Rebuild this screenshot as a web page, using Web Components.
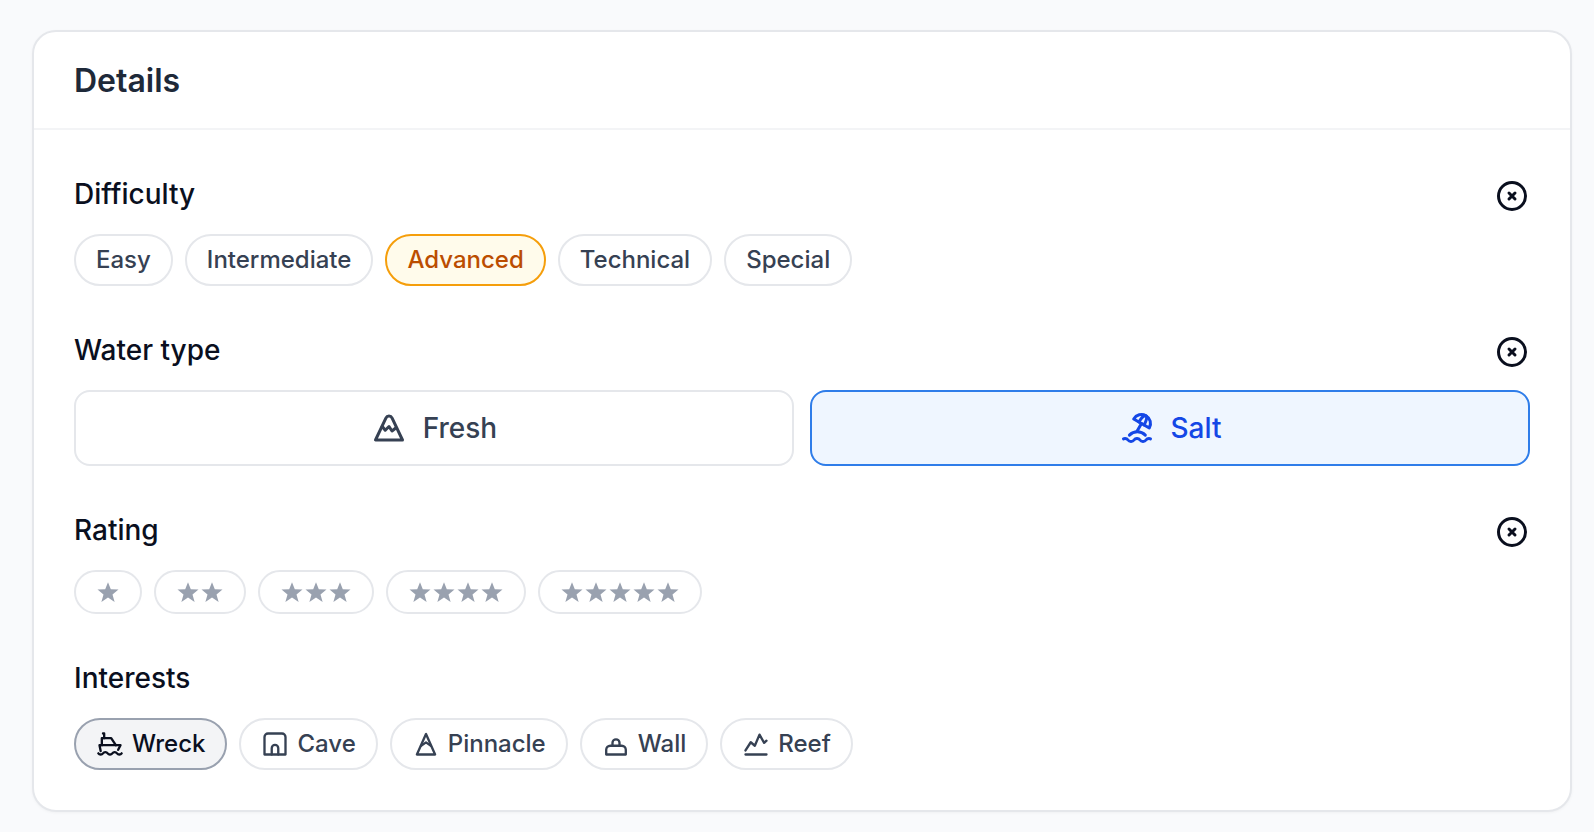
<!DOCTYPE html>
<html lang="en">
<head>
<meta charset="utf-8">
<meta name="viewport" content="width=device-width, initial-scale=1">
<title>Details</title>
<style>
  body {
    margin: 0;
    padding: 30px 22px 20px 32px;
    background: #f9fafc;
    color: #0a0f1e;
    font-family: Inter, "Liberation Sans", sans-serif;
  }
</style>
</head>
<body>

<detail-card heading="Details">
  <detail-field label="Difficulty" clearable>
    <choice-pill>Easy</choice-pill>
    <choice-pill>Intermediate</choice-pill>
    <choice-pill tone="amber" selected>Advanced</choice-pill>
    <choice-pill>Technical</choice-pill>
    <choice-pill>Special</choice-pill>
  </detail-field>

  <detail-field label="Water type" layout="split" clearable>
    <choice-pill shape="tile" icon="mountain" tone="blue">Fresh</choice-pill>
    <choice-pill shape="tile" icon="beach" tone="blue" selected>Salt</choice-pill>
  </detail-field>

  <detail-field label="Rating" clearable>
    <star-pill count="1"></star-pill>
    <star-pill count="2"></star-pill>
    <star-pill count="3"></star-pill>
    <star-pill count="4"></star-pill>
    <star-pill count="5"></star-pill>
  </detail-field>

  <detail-field label="Interests" multiple>
    <choice-pill icon="ship" selected>Wreck</choice-pill>
    <choice-pill icon="cave">Cave</choice-pill>
    <choice-pill icon="pinnacle">Pinnacle</choice-pill>
    <choice-pill icon="wall">Wall</choice-pill>
    <choice-pill icon="reef">Reef</choice-pill>
  </detail-field>
</detail-card>

<script>
// Outline icons on a 24 unit grid
const ICONS = {
  clear: ['M3 12a9 9 0 1 0 18 0a9 9 0 1 0 -18 0', 'M10 10l4 4m0 -4l-4 4'],
  mountain: [
    'M3 20h18l-6.921 -14.612a2.3 2.3 0 0 0 -4.158 0z',
    'M7.5 11l2 2.5l2.5 -2.5l2 3l2.5 -2'
  ],
  beach: [
    'M17.553 16.75a7.5 7.5 0 0 0 -10.606 0',
    'M18 3.804a6 6 0 0 0 -8.196 2.196l10.392 6a6 6 0 0 0 -2.196 -8.196z',
    'M16.732 10c1.658 -2.87 2.225 -5.644 1.268 -6.196c-.957 -.552 -3.075 1.326 -4.732 4.196',
    'M15 9l-3 5.196',
    'M3 19.25a2.4 2.4 0 0 1 1 -.25a2.4 2.4 0 0 1 2 1a2.4 2.4 0 0 0 2 1a2.4 2.4 0 0 0 2 -1a2.4 2.4 0 0 1 2 -1a2.4 2.4 0 0 1 2 1a2.4 2.4 0 0 0 2 1a2.4 2.4 0 0 0 2 -1a2.4 2.4 0 0 1 2 -1a2.4 2.4 0 0 1 1 .25'
  ],
  ship: [
    'M2 20a2.4 2.4 0 0 0 2 1a2.4 2.4 0 0 0 2 -1a2.4 2.4 0 0 1 2 -1a2.4 2.4 0 0 1 2 1a2.4 2.4 0 0 0 2 1a2.4 2.4 0 0 0 2 -1a2.4 2.4 0 0 1 2 -1a2.4 2.4 0 0 1 2 1a2.4 2.4 0 0 0 2 1a2.4 2.4 0 0 0 2 -1',
    'M4 18l-1 -5h18l-2 4',
    'M5 13v-6h8l4 6',
    'M7 7v-4h-1'
  ],
  cave: [
    'M3 21v-15a3 3 0 0 1 3 -3h12a3 3 0 0 1 3 3v15z',
    'M9.2 21v-5.4a2.8 2.8 0 0 1 5.6 0v5.4'
  ],
  pinnacle: ['M4.2 21h15.6l-7.8 -17.6z', 'M7.8 13.6l4.2 -3l4.2 3'],
  wall: [
    'M3.6 21v-4a3.5 3.5 0 0 1 3.5 -3.5h9.8a3.5 3.5 0 0 1 3.5 3.5v4z',
    'M9 13.5v-2.5a3 3 0 0 1 6 0v2.5'
  ],
  reef: ['M3 21h18', 'M3 17.5l4.5 -7l3.5 3l4 -9.5l4 7l2 -1.8']
};

const STAR = 'M12 2.2l2.8 7l7.7 .3l-6 4.9l2.1 7.5l-6.6 -4.3l-6.6 4.3l2.1 -7.5l-6 -4.9l7.7 -.3z';

class LineIcon extends HTMLElement {
  constructor() {
    super();
    this.attachShadow({ mode: 'open' });
  }

  connectedCallback() {
    const paths = (ICONS[this.getAttribute('name')] || []).map(d => `<path d="${d}"/>`).join('');
    this.shadowRoot.innerHTML = `
      <style>
        :host { display: block; flex: none; width: 28px; height: 28px; }
        svg {
          display: block;
          width: 100%;
          height: 100%;
          fill: none;
          stroke: currentColor;
          stroke-width: 2;
          stroke-linecap: round;
          stroke-linejoin: round;
        }
      </style>
      <svg viewBox="0 0 24 24" aria-hidden="true">${paths}</svg>
    `;
  }
}

class DetailCard extends HTMLElement {
  constructor() {
    super();
    this.attachShadow({ mode: 'open' });
  }

  connectedCallback() {
    this.shadowRoot.innerHTML = `
      <style>
        :host {
          display: block;
          border: 2px solid #e5e7eb;
          border-radius: 24px;
          background: #fff;
          box-shadow: 0 1px 3px rgba(0, 0, 0, 0.04);
        }
        header {
          padding: 25px 40px 23px;
          border-bottom: 2px solid #f3f4f6;
        }
        h2 {
          margin: 0;
          color: #1e2939;
          font-size: 32px;
          font-weight: 600;
          line-height: 48px;
        }
        .body {
          display: flex;
          flex-direction: column;
          gap: 44px;
          padding: 44px 40px 40px;
        }
      </style>
      <header><h2></h2></header>
      <div class="body"><slot></slot></div>
    `;
    this.shadowRoot.querySelector('h2').textContent = this.getAttribute('heading');
  }
}

class DetailField extends HTMLElement {
  constructor() {
    super();
    this.attachShadow({ mode: 'open' });
  }

  connectedCallback() {
    const label = this.getAttribute('label');
    this.shadowRoot.innerHTML = `
      <style>
        :host { display: block; }
        .top {
          display: flex;
          align-items: flex-end;
          justify-content: space-between;
          margin-bottom: 20px;
        }
        h3 {
          margin: 0;
          font-size: 28px;
          font-weight: 500;
          line-height: 40px;
        }
        .clear {
          padding: 0;
          border: 0;
          background: none;
          color: inherit;
          cursor: pointer;
        }
        .clear line-icon { width: 36px; height: 36px; }
        .options {
          display: flex;
          flex-wrap: wrap;
          gap: 12px;
        }
        :host([layout="split"]) .options {
          display: grid;
          grid-template-columns: 1fr 1fr;
          gap: 16px;
        }
      </style>
      <div class="top">
        <h3 id="label">${label}</h3>
        ${this.hasAttribute('clearable')
          ? `<button class="clear" type="button" aria-label="Clear ${label}"><line-icon name="clear"></line-icon></button>`
          : ''}
      </div>
      <div class="options" role="group" aria-labelledby="label"><slot></slot></div>
    `;

    this.shadowRoot.querySelector('.clear')?.addEventListener('click', () => this.clear());
    this.addEventListener('choice', (event) => {
      const wasSelected = event.target.hasAttribute('selected');
      if (!this.hasAttribute('multiple')) this.clear();
      event.target.toggleAttribute('selected', !wasSelected);
    });
  }

  clear() {
    [...this.children].forEach(child => child.removeAttribute('selected'));
  }
}

const PILL_STYLE = `
  :host { display: block; }
  button {
    display: flex;
    align-items: center;
    justify-content: center;
    gap: 8px;
    box-sizing: border-box;
    width: 100%;
    padding: 8px 20px;
    border: 2px solid #e5e7eb;
    border-radius: 26px;
    background: #fff;
    color: #364153;
    font: inherit;
    font-size: 24px;
    font-weight: 500;
    line-height: 32px;
    cursor: pointer;
  }
  :host([selected]) button {
    border-color: #99a1af;
    background: #f3f4f6;
    color: #0a0f1e;
  }
  :host([selected][tone="amber"]) button {
    border-color: #f59e0b;
    background: #fffbeb;
    color: #bb4d00;
  }
  :host([selected][tone="blue"]) button {
    border-color: #2f7de9;
    background: #eff6ff;
    color: #1447e6;
  }
  :host([shape="tile"]) button {
    gap: 16px;
    padding: 16px 20px;
    border-radius: 16px;
    font-size: 28px;
    line-height: 40px;
  }
  :host([shape="tile"]) line-icon { width: 36px; height: 36px; }
`;

class ChoicePill extends HTMLElement {
  static observedAttributes = ['selected'];

  constructor() {
    super();
    this.attachShadow({ mode: 'open' });
  }

  connectedCallback() {
    this.shadowRoot.innerHTML = `
      <style>${PILL_STYLE}</style>
      <button type="button">${this.content()}</button>
    `;
    this.shadowRoot.querySelector('button').addEventListener('click', () => {
      this.dispatchEvent(new CustomEvent('choice', { bubbles: true }));
    });
    this.updateUI();
  }

  attributeChangedCallback() {
    this.updateUI();
  }

  content() {
    const icon = this.getAttribute('icon');
    return `${icon ? `<line-icon name="${icon}"></line-icon>` : ''}<slot></slot>`;
  }

  updateUI() {
    const button = this.shadowRoot.querySelector('button');
    if (button) button.setAttribute('aria-pressed', this.hasAttribute('selected'));
  }
}

// Pill that shows a number of stars in place of a text
class StarPill extends ChoicePill {
  connectedCallback() {
    super.connectedCallback();
    const count = Number(this.getAttribute('count'));
    this.shadowRoot.querySelector('button').setAttribute('aria-label', `${count} ${count === 1 ? 'star' : 'stars'}`);
  }

  content() {
    const star = `<svg viewBox="0 0 24 24" aria-hidden="true"><path d="${STAR}"/></svg>`;
    return `
      <style>
        button { gap: 0; color: #99a1af; }
        svg { display: block; width: 24px; height: 24px; fill: currentColor; }
      </style>
      ${star.repeat(Number(this.getAttribute('count')))}
    `;
  }
}

customElements.define('line-icon', LineIcon);
customElements.define('detail-card', DetailCard);
customElements.define('detail-field', DetailField);
customElements.define('choice-pill', ChoicePill);
customElements.define('star-pill', StarPill);
</script>
</body>
</html>
